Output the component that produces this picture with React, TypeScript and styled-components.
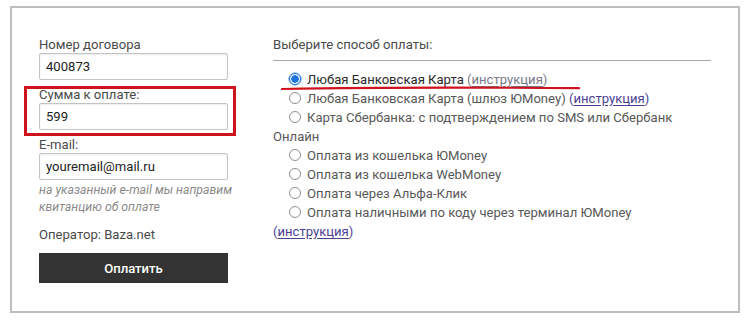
import React from "react";
import styled, { createGlobalStyle } from "styled-components";

const Global = createGlobalStyle`
  html, body { margin: 0; padding: 0; background: #fff; }
  body { font-family: Roboto, "Noto Sans", sans-serif; }
  * { box-sizing: border-box; }
`;

const Page = styled.div`
  padding: 6px 0 0 10px;
  width: 750px;
  height: 323px;
`;

const Frame = styled.div`
  width: 730px;
  height: 307px;
  border: 2px solid #bdbdbd;
  display: flex;
  padding: 22px 0 0 27px;
  gap: 45px;
`;

const LeftCol = styled.div`
  width: 189px;
  display: flex;
  flex-direction: column;
`;

const Label = styled.div`
  font-size: 13.1px;
  line-height: 16px;
  color: #4a4a4a;
  margin-top: 7px;
`;

const Input = styled.div`
  height: 27px;
  border: 1px solid #c4c4c4;
  border-radius: 2px;
  box-shadow: inset 0 1px 2px rgba(0, 0, 0, 0.08);
  font-size: 13.1px;
  line-height: 25px;
  color: #222;
  padding-left: 6px;
`;

const Highlight = styled.div`
  position: relative;
  display: flex;
  flex-direction: column;
  &::after {
    content: "";
    position: absolute;
    left: -15px;
    right: -8px;
    top: 6px;
    bottom: -6px;
    border: 3px solid #d0121f;
    pointer-events: none;
  }
`;

const Note = styled.div`
  margin-top: 2px;
  font-size: 12.3px;
  line-height: 17px;
  font-style: italic;
  color: #8a8a8a;
  white-space: nowrap;
`;

const Operator = styled.div`
  margin-top: 11px;
  font-size: 13.1px;
  line-height: 16px;
  color: #4a4a4a;
`;

const PayButton = styled.button`
  margin-top: 10px;
  height: 30px;
  border: none;
  background: #333333;
  color: #fff;
  font-family: Roboto, sans-serif;
  font-size: 13.1px;
  font-weight: 500;
  padding: 0;
`;

const RightCol = styled.div`
  width: 438px;
  display: flex;
  flex-direction: column;
`;

const Heading = styled.div`
  margin-top: 7px;
  font-size: 13.1px;
  line-height: 16px;
  color: #4a4a4a;
`;

const Rule = styled.div`
  margin-top: 7px;
  height: 1px;
  background: #a8a8a8;
`;

const List = styled.div`
  position: relative;
  margin-top: 9px;
  font-size: 13.1px;
  line-height: 19px;
  color: #555;
`;

const Item = styled.div<{ $selected?: boolean }>`
  color: ${(p) => (p.$selected ? "#2a2a2a" : "#585858")};
`;

const Radio = styled.span<{ $checked?: boolean }>`
  display: inline-block;
  width: 12px;
  height: 12px;
  margin: 0 6px 0 16px;
  border-radius: 50%;
  vertical-align: -1px;
  border: 1px solid ${(p) => (p.$checked ? "#1a73e8" : "#8f8f8f")};
  background: ${(p) =>
    p.$checked ? "radial-gradient(circle, #1a73e8 0 3.5px, #fff 4px)" : "#fff"};
  box-shadow: ${(p) => (p.$checked ? "0 0 0 0.5px #1a73e8" : "none")};
`;

const Link = styled.a<{ $muted?: boolean }>`
  color: ${(p) => (p.$muted ? "#7a7a8a" : "#4e3f96")};
  text-decoration: underline;
  text-underline-offset: 2px;
`;

const Paren = styled.span<{ $muted?: boolean }>`
  color: ${(p) => (p.$muted ? "#7a7a8a" : "#4e3f96")};
`;

const Squiggle = styled.svg`
  position: absolute;
  left: 8px;
  top: 15px;
  pointer-events: none;
`;

const Instr = ({ muted }: { muted?: boolean }) => (
  <>
    <Paren $muted={muted}>(</Paren>
    <Link $muted={muted}>инструкция</Link>
    <Paren $muted={muted}>)</Paren>
  </>
);

export default function App() {
  return (
    <Page>
      <Global />
      <Frame>
        <LeftCol>
          <Label>Номер договора</Label>
          <Input>400873</Input>
          <Highlight>
            <Label>Сумма к оплате:</Label>
            <Input>599</Input>
          </Highlight>
          <Label>E-mail:</Label>
          <Input>youremail@mail.ru</Input>
          <Note>
            на указанный e-mail мы направим
            <br />
            квитанцию об оплате
          </Note>
          <Operator>Оператор: Baza.net</Operator>
          <PayButton>Оплатить</PayButton>
        </LeftCol>
        <RightCol>
          <Heading>Выберите способ оплаты:</Heading>
          <Rule />
          <List>
            <Item $selected>
              <Radio $checked />
              Любая Банковская Карта <Instr muted />
            </Item>
            <Item>
              <Radio />
              Любая Банковская Карта (шлюз ЮMoney) <Instr />
            </Item>
            <Item>
              <Radio />
              Карта Сбербанка: с подтверждением по SMS или Сбербанк Онлайн
            </Item>
            <Item>
              <Radio />
              Оплата из кошелька ЮMoney
            </Item>
            <Item>
              <Radio />
              Оплата из кошелька WebMoney
            </Item>
            <Item>
              <Radio />
              Оплата через Альфа-Клик
            </Item>
            <Item>
              <Radio />
              Оплата наличными по коду через терминал ЮMoney <Instr />
            </Item>
            <Squiggle width="300" height="6" viewBox="0 0 300 6">
              <path
                d="M1 4 C 80 2.6, 200 2.4, 298 3.2"
                stroke="#d0121f"
                strokeWidth="2.2"
                fill="none"
                strokeLinecap="round"
              />
            </Squiggle>
          </List>
        </RightCol>
      </Frame>
    </Page>
  );
}
